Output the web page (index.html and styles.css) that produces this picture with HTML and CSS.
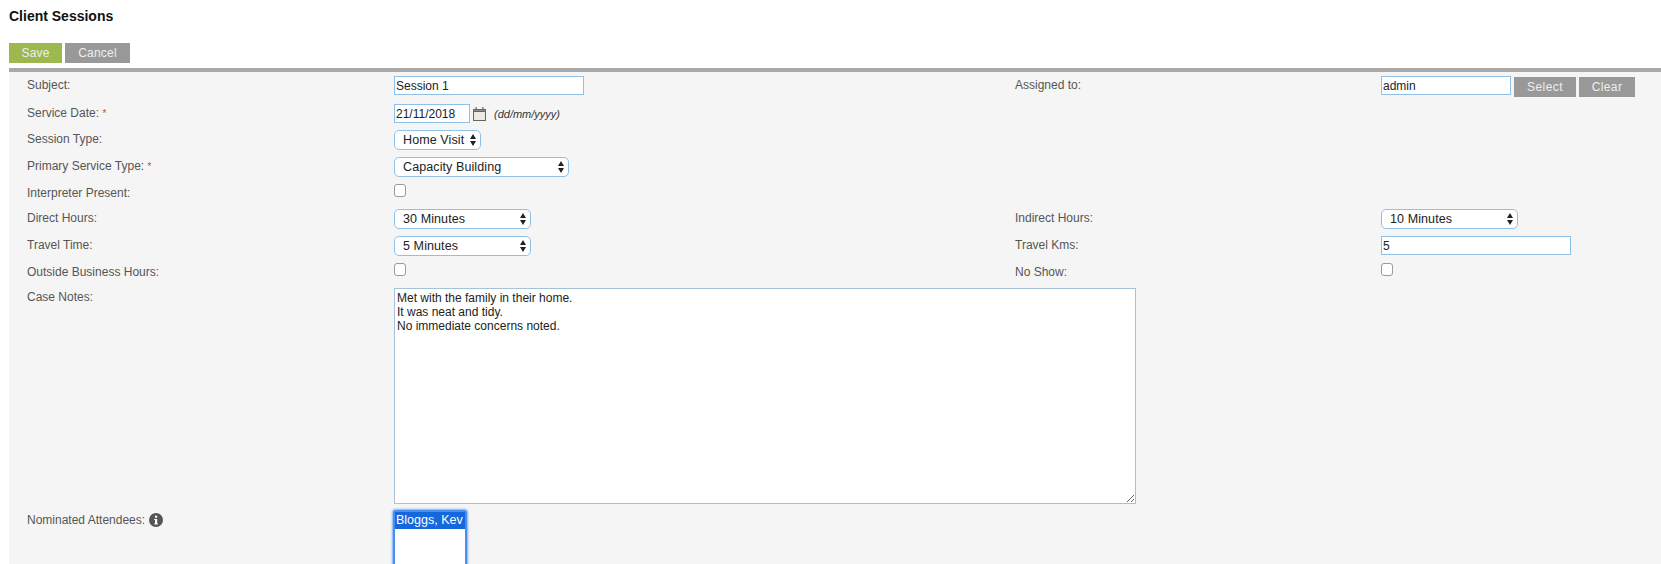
FILE: index.html
```html
<!DOCTYPE html>
<html lang="en">
<head>
<meta charset="utf-8">
<title>Client Sessions</title>
<link rel="stylesheet" href="styles.css">
</head>
<body>
<h1 class="page-title">Client Sessions</h1>
<div class="toolbar">
  <button class="btn btn-save" type="button">Save</button>
  <button class="btn btn-cancel" type="button">Cancel</button>
</div>
<form class="panel">
  <label class="label">Subject:</label>
  <div class="field"><input class="text w-subject" type="text" value="Session 1"></div>
  <label class="label">Assigned to:</label>
  <div class="field field-row">
    <input class="text w-assigned" type="text" value="admin">
    <button class="btn btn-small btn-select" type="button">Select</button>
    <button class="btn btn-small btn-clear" type="button">Clear</button>
  </div>

  <label class="label">Service Date: <span class="req">*</span></label>
  <div class="field field-row">
    <input class="text w-date" type="text" value="21/11/2018">
    <svg class="cal" viewBox="0 0 13 14" width="13" height="14" aria-hidden="true">
      <rect x="0" y="2" width="13" height="12" fill="#66665e"/>
      <rect x="2.5" y="0" width="1.2" height="3" fill="#66665e"/>
      <rect x="9.3" y="0" width="1.2" height="3" fill="#66665e"/>
      <rect x="1" y="3" width="11" height="1" fill="#8f8f88"/>
      <rect x="1" y="5" width="11" height="8" fill="#eceae2"/>
    </svg>
    <span class="hint">(dd/mm/yyyy)</span>
  </div>
  <div class="empty"></div><div class="empty"></div>

  <label class="label">Session Type:</label>
  <div class="field"><select class="pick w-session"><option>Home Visit</option></select></div>
  <div class="empty"></div><div class="empty"></div>

  <label class="label">Primary Service Type: <span class="req">*</span></label>
  <div class="field"><select class="pick w-primary"><option>Capacity Building</option></select></div>
  <div class="empty"></div><div class="empty"></div>

  <label class="label">Interpreter Present:</label>
  <div class="field"><input class="check" type="checkbox"></div>
  <div class="empty"></div><div class="empty"></div>

  <label class="label">Direct Hours:</label>
  <div class="field"><select class="pick w-hours"><option>30 Minutes</option></select></div>
  <label class="label">Indirect Hours:</label>
  <div class="field"><select class="pick w-hours"><option>10 Minutes</option></select></div>

  <label class="label">Travel Time:</label>
  <div class="field"><select class="pick w-hours"><option>5 Minutes</option></select></div>
  <label class="label">Travel Kms:</label>
  <div class="field"><input class="text w-subject" type="text" value="5"></div>

  <label class="label">Outside Business Hours:</label>
  <div class="field"><input class="check" type="checkbox"></div>
  <label class="label">No Show:</label>
  <div class="field"><input class="check" type="checkbox"></div>

  <label class="label">Case Notes:</label>
  <div class="field span-3"><textarea class="notes">Met with the family in their home.
It was neat and tidy.
No immediate concerns noted.</textarea></div>

  <label class="label label-down">Nominated Attendees: <svg class="info" viewBox="0 0 14 14" width="14" height="14" aria-hidden="true"><circle cx="7" cy="7" r="7" fill="#555"/><rect x="6" y="6" width="2.2" height="5.2" fill="#fff"/><rect x="5.2" y="6" width="2" height="1" fill="#fff"/><rect x="5.2" y="10.4" width="3.8" height="1" fill="#fff"/><circle cx="7.1" cy="3.8" r="1.2" fill="#fff"/></svg></label>
  <div class="field span-3"><div class="listbox"><div class="listbox-item">Bloggs, Kev</div></div></div>
</form>
</body>
</html>
```

FILE: styles.css
```css
html, body {
  margin: 0;
  height: 564px;
  overflow: hidden;
  background: #fff;
}
body {
  padding-left: 9px;
  font-family: "Liberation Sans", Arial, sans-serif;
  font-size: 12px;
  color: #555;
}
.page-title {
  margin: 0;
  padding-top: 9px;
  height: 43px;
  box-sizing: border-box;
  font-size: 14px;
  line-height: 15px;
  font-weight: 700;
  color: #111;
}
.toolbar {
  display: flex;
  gap: 3px;
  height: 25px;
  align-items: flex-start;
}
.btn {
  height: 20px;
  padding: 0;
  border: 0;
  color: #eee;
  font-family: "Liberation Sans", Arial, sans-serif;
  font-size: 12px;
  letter-spacing: .2px;
}
.btn-save { width: 53px; background: #9db84f; }
.btn-cancel { width: 65px; background: #999; }
.btn-small { background: #999; margin-top: 1px; letter-spacing: .4px; }
.btn-select { width: 62px; margin-left: 3px; }
.btn-clear { width: 56px; margin-left: 3px; }
.panel {
  display: grid;
  grid-template-columns: 367px 621px 366px 1fr;
  grid-template-rows: 28px 26px 27px 27px 25px 27px 27px 25px 222px 120px;
  padding: 4px 0 0 18px;
  background: #f5f5f5;
  border-top: 4px solid #a9a9a9;
  height: 500px;
  box-sizing: border-box;
  overflow: hidden;
}
.label {
  display: block;
  margin-top: 1px;
  line-height: 16px;
  height: 16px;
}
.label-down { margin-top: 2px; display: flex; align-items: center; gap: 4px; }
.req {
  color: #e04040;
  font-size: 10px;
}
.field { display: block; }
.field-row { display: flex; align-items: flex-start; }
.span-3 { grid-column: span 3; }
.text {
  box-sizing: border-box;
  height: 19px;
  margin: 0;
  padding: 0 1px;
  border: 1px solid #8fc0e6;
  background: #fff;
  color: #222;
  font: 12px "Liberation Sans", Arial, sans-serif;
  outline: 0;
}
.w-subject { width: 190px; }
.w-assigned { width: 130px; }
.w-date { width: 76px; }
.cal { margin: 3px 0 0 3px; }
.hint {
  margin: 2px 0 0 8px;
  font-size: 11px;
  line-height: 16px;
  font-style: italic;
  color: #333;
}
.pick {
  display: block;
  box-sizing: border-box;
  height: 20px;
  margin: 0;
  padding: 0 14px 0 8px;
  border: 1px solid #8fc0e6;
  border-radius: 5px;
  appearance: none;
  background: #fff url("data:image/svg+xml,%3Csvg xmlns='http://www.w3.org/2000/svg' width='6' height='12'%3E%3Cpath d='M3 0 6 5H0zM0 7h6l-3 5z' fill='%23222'/%3E%3C/svg%3E") no-repeat right 4px center;
  color: #222;
  font: 12.5px "Liberation Sans", Arial, sans-serif;
  letter-spacing: .1px;
  outline: 0;
}
.w-session { width: 87px; }
.w-primary { width: 175px; }
.w-hours { width: 137px; }
.check {
  display: block;
  box-sizing: border-box;
  width: 12px;
  height: 13px;
  margin: 0;
  appearance: none;
  background: #fff;
  border: 1px solid #9a9a9a;
  border-radius: 3px;
}
.notes {
  display: block;
  box-sizing: border-box;
  width: 742px;
  height: 216px;
  margin: 0;
  padding: 2px;
  border: 1px solid #a6c2d8;
  background: #fff;
  color: #222;
  font: 12px/14px "Liberation Sans", Arial, sans-serif;
  outline: 0;
  resize: both;
}
.info { flex: none; }
.listbox {
  box-sizing: border-box;
  width: 74px;
  height: 120px;
  margin-left: -1px;
  background: #fff;
  border: 2px solid #4a8ef0;
  border-radius: 3px;
  box-shadow: 0 0 2px 1px #7fb0f5;
}
.listbox-item {
  height: 17px;
  padding: 0 1px;
  background: #1568dc;
  color: #fff;
  font: 12.5px/17px "Liberation Sans", Arial, sans-serif;
  white-space: nowrap;
}
```
